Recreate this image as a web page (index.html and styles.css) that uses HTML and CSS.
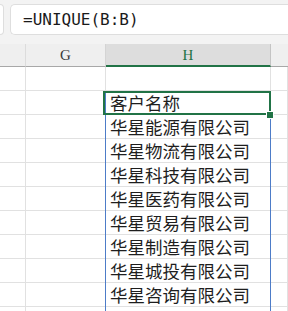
FILE: index.html
```html
<!DOCTYPE html>
<html lang="zh">
<head>
<meta charset="utf-8">
<link rel="stylesheet" href="styles.css">
</head>
<body>
<div class="sheet">
  <div class="toolbar">
    <div class="namebox"></div>
    <div class="formula">=UNIQUE(B:B)</div>
  </div>
  <div class="grid">
    <div class="hd hd-f"></div>
    <div class="hd hd-g">G</div>
    <div class="hd hd-h">H</div>
    <div class="hd hd-i"></div>

    <div class="c"></div><div class="c"></div><div class="c"></div><div class="c"></div>
    <div class="c"></div><div class="c"></div><div class="c t">客户名称</div><div class="c"></div>
    <div class="c"></div><div class="c"></div><div class="c t">华星能源有限公司</div><div class="c"></div>
    <div class="c"></div><div class="c"></div><div class="c t">华星物流有限公司</div><div class="c"></div>
    <div class="c"></div><div class="c"></div><div class="c t">华星科技有限公司</div><div class="c"></div>
    <div class="c"></div><div class="c"></div><div class="c t">华星医药有限公司</div><div class="c"></div>
    <div class="c"></div><div class="c"></div><div class="c t">华星贸易有限公司</div><div class="c"></div>
    <div class="c"></div><div class="c"></div><div class="c t">华星制造有限公司</div><div class="c"></div>
    <div class="c"></div><div class="c"></div><div class="c t">华星城投有限公司</div><div class="c"></div>
    <div class="c"></div><div class="c"></div><div class="c t">华星咨询有限公司</div><div class="c"></div>
    <div class="c"></div><div class="c"></div><div class="c"></div><div class="c"></div>
  </div>
  <div class="spill"></div>
  <div class="active"></div>
  <div class="handle"></div>
</div>
</body>
</html>
```
FILE: styles.css
```css
html, body {
  margin: 0;
  padding: 0;
  background: #ffffff;
  overflow: hidden;
}
.sheet {
  position: relative;
  width: 288px;
  height: 311px;
  overflow: hidden;
}
.toolbar {
  height: 44px;
  background: #f3f3f3;
  display: flex;
  gap: 6px;
  padding-top: 4px;
  box-sizing: border-box;
}
.namebox {
  width: 4px;
  height: 31px;
  box-sizing: border-box;
  background: #ffffff;
  border: 1px solid #dedede;
  border-left: none;
  border-radius: 0 5px 5px 0;
}
.formula {
  flex: 1;
  height: 31px;
  box-sizing: border-box;
  background: #ffffff;
  border: 1px solid #dedede;
  border-right: none;
  border-radius: 5px 0 0 5px;
  padding-left: 12px;
  font-family: "DejaVu Sans Mono", "Liberation Mono", monospace;
  font-size: 16px;
  line-height: 29px;
  color: #1a1a1a;
}
.grid {
  display: grid;
  grid-template-columns: 26px 80px 165px 17px;
  grid-auto-rows: 24px;
  grid-template-rows: 23px;
}
.hd {
  background: #efefef;
  border-right: 1px solid #d4d4d4;
  border-bottom: 1px solid #a8a8a8;
  font-family: "Liberation Serif", "DejaVu Serif", serif;
  font-size: 15px;
  color: #3a3a3a;
  display: flex;
  align-items: center;
  justify-content: center;
  padding-top: 1px;
  box-sizing: border-box;
}
.hd-f {
  border-right-color: #dcdcdc;
}
.hd-h {
  background: #dddddd;
  color: #217346;
  border-bottom: 2px solid #217346;
  border-right-color: #c4c4c4;
}
.hd-i {
  border-right: none;
}
.c {
  border-right: 1px solid #e1e1e1;
  border-bottom: 1px solid #e1e1e1;
  box-sizing: border-box;
}
.t {
  font-family: "Noto Sans CJK SC", sans-serif;
  font-size: 17.5px;
  line-height: 22px;
  color: #1e1e1e;
  padding-left: 4px;
  display: flex;
  align-items: flex-end;
  white-space: nowrap;
  overflow: hidden;
}
.spill {
  position: absolute;
  left: 105px;
  top: 91px;
  width: 166px;
  height: 240px;
  box-sizing: border-box;
  border-left: 1px solid #4d7cc8;
  border-right: 1px solid #4d7cc8;
}
.active {
  position: absolute;
  left: 103px;
  top: 91px;
  width: 168px;
  height: 24px;
  box-sizing: border-box;
  border: 2px solid #217346;
}
.handle {
  position: absolute;
  left: 267px;
  top: 112px;
  width: 6px;
  height: 6px;
  background: #217346;
  box-shadow: 0 0 0 1px #ffffff;
}
```
